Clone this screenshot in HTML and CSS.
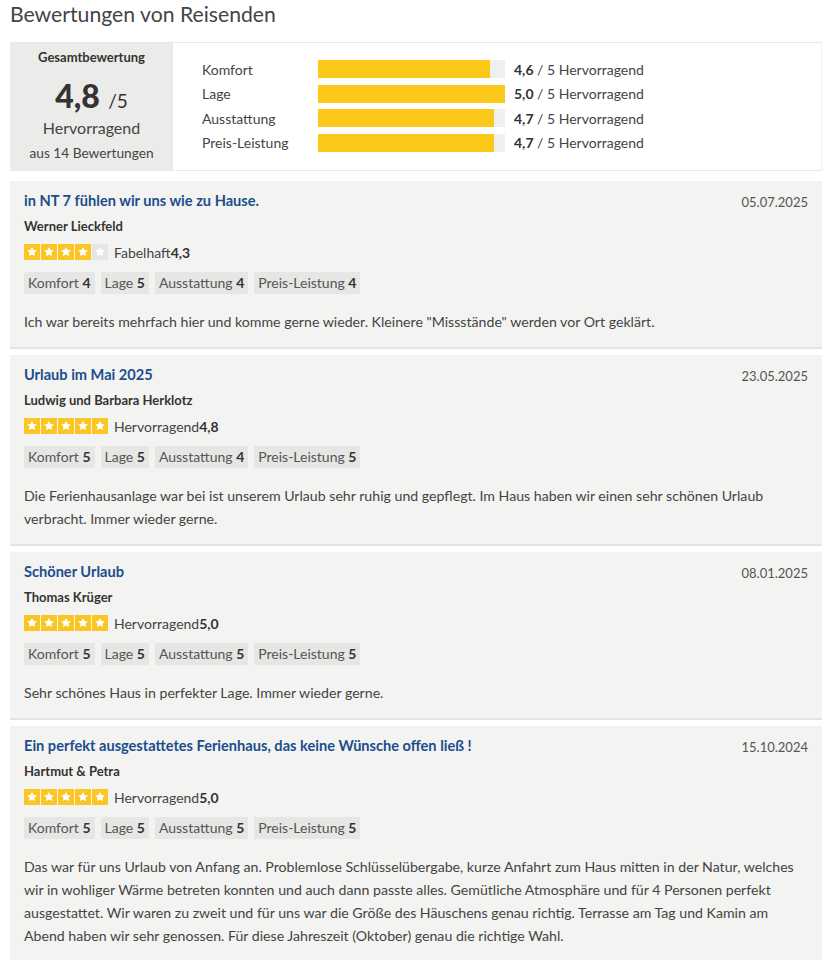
FILE: index.html
```html
<!DOCTYPE html>
<html lang="de">
<head>
<meta charset="utf-8">
<title>Bewertungen von Reisenden</title>
<link rel="stylesheet" href="styles.css">
</head>
<body>
<svg class="defs" width="0" height="0" aria-hidden="true">
  <defs>
    <symbol id="star" viewBox="0 0 16 16">
      <path d="M8 2.9l1.5 3.1 3.4.4-2.5 2.3.7 3.4L8 10.5l-3.1 1.6.7-3.4-2.5-2.3 3.4-.4z" fill="#fff"/>
    </symbol>
  </defs>
</svg>
<main class="page">
  <h1 class="heading">Bewertungen von Reisenden</h1>

  <section class="summary">
    <div class="overall">
      <div class="overall-label">Gesamtbewertung</div>
      <div class="overall-score"><strong>4,8</strong> <span>/5</span></div>
      <div class="overall-word">Hervorragend</div>
      <div class="overall-count">aus 14 Bewertungen</div>
    </div>
    <div class="bars">
      <div class="bar-row">
        <span class="bar-label">Komfort</span>
        <span class="bar-track"><span class="bar-fill" style="width:92%"></span></span>
        <span class="bar-value"><b>4,6</b> / 5 Hervorragend</span>
      </div>
      <div class="bar-row">
        <span class="bar-label">Lage</span>
        <span class="bar-track"><span class="bar-fill" style="width:100%"></span></span>
        <span class="bar-value"><b>5,0</b> / 5 Hervorragend</span>
      </div>
      <div class="bar-row">
        <span class="bar-label">Ausstattung</span>
        <span class="bar-track"><span class="bar-fill" style="width:94%"></span></span>
        <span class="bar-value"><b>4,7</b> / 5 Hervorragend</span>
      </div>
      <div class="bar-row">
        <span class="bar-label">Preis-Leistung</span>
        <span class="bar-track"><span class="bar-fill" style="width:94%"></span></span>
        <span class="bar-value"><b>4,7</b> / 5 Hervorragend</span>
      </div>
    </div>
  </section>

  <article class="review">
    <div class="review-head">
      <h2 class="review-title">in NT 7 fühlen wir uns wie zu Hause.</h2>
      <span class="review-date">05.07.2025</span>
    </div>
    <div class="review-author">Werner Lieckfeld</div>
    <div class="review-rating">
      <span class="stars">
        <svg class="star on"><use href="#star"/></svg><svg class="star on"><use href="#star"/></svg><svg class="star on"><use href="#star"/></svg><svg class="star on"><use href="#star"/></svg><svg class="star off"><use href="#star"/></svg>
      </span>
      <span class="rating-text">Fabelhaft<b>4,3</b></span>
    </div>
    <div class="tags">
      <span class="tag">Komfort <b>4</b></span>
      <span class="tag">Lage <b>5</b></span>
      <span class="tag">Ausstattung <b>4</b></span>
      <span class="tag">Preis-Leistung <b>4</b></span>
    </div>
    <p class="review-text">Ich war bereits mehrfach hier und komme gerne wieder. Kleinere "Missstände" werden vor Ort geklärt.</p>
  </article>

  <article class="review">
    <div class="review-head">
      <h2 class="review-title">Urlaub im Mai 2025</h2>
      <span class="review-date">23.05.2025</span>
    </div>
    <div class="review-author">Ludwig und Barbara Herklotz</div>
    <div class="review-rating">
      <span class="stars">
        <svg class="star on"><use href="#star"/></svg><svg class="star on"><use href="#star"/></svg><svg class="star on"><use href="#star"/></svg><svg class="star on"><use href="#star"/></svg><svg class="star on"><use href="#star"/></svg>
      </span>
      <span class="rating-text">Hervorragend<b>4,8</b></span>
    </div>
    <div class="tags">
      <span class="tag">Komfort <b>5</b></span>
      <span class="tag">Lage <b>5</b></span>
      <span class="tag">Ausstattung <b>4</b></span>
      <span class="tag">Preis-Leistung <b>5</b></span>
    </div>
    <p class="review-text">Die Ferienhausanlage war bei ist unserem Urlaub sehr ruhig und gepflegt. Im Haus haben wir einen sehr schönen Urlaub verbracht. Immer wieder gerne.</p>
  </article>

  <article class="review">
    <div class="review-head">
      <h2 class="review-title">Schöner Urlaub</h2>
      <span class="review-date">08.01.2025</span>
    </div>
    <div class="review-author">Thomas Krüger</div>
    <div class="review-rating">
      <span class="stars">
        <svg class="star on"><use href="#star"/></svg><svg class="star on"><use href="#star"/></svg><svg class="star on"><use href="#star"/></svg><svg class="star on"><use href="#star"/></svg><svg class="star on"><use href="#star"/></svg>
      </span>
      <span class="rating-text">Hervorragend<b>5,0</b></span>
    </div>
    <div class="tags">
      <span class="tag">Komfort <b>5</b></span>
      <span class="tag">Lage <b>5</b></span>
      <span class="tag">Ausstattung <b>5</b></span>
      <span class="tag">Preis-Leistung <b>5</b></span>
    </div>
    <p class="review-text">Sehr schönes Haus in perfekter Lage. Immer wieder gerne.</p>
  </article>

  <article class="review">
    <div class="review-head">
      <h2 class="review-title">Ein perfekt ausgestattetes Ferienhaus, das keine Wünsche offen ließ !</h2>
      <span class="review-date">15.10.2024</span>
    </div>
    <div class="review-author">Hartmut &amp; Petra</div>
    <div class="review-rating">
      <span class="stars">
        <svg class="star on"><use href="#star"/></svg><svg class="star on"><use href="#star"/></svg><svg class="star on"><use href="#star"/></svg><svg class="star on"><use href="#star"/></svg><svg class="star on"><use href="#star"/></svg>
      </span>
      <span class="rating-text">Hervorragend<b>5,0</b></span>
    </div>
    <div class="tags">
      <span class="tag">Komfort <b>5</b></span>
      <span class="tag">Lage <b>5</b></span>
      <span class="tag">Ausstattung <b>5</b></span>
      <span class="tag">Preis-Leistung <b>5</b></span>
    </div>
    <p class="review-text">Das war für uns Urlaub von Anfang an. Problemlose Schlüsselübergabe, kurze Anfahrt zum Haus mitten in der Natur, welches wir in wohliger Wärme betreten konnten und auch dann passte alles. Gemütliche Atmosphäre und für 4 Personen perfekt ausgestattet. Wir waren zu zweit und für uns war die Größe des Häuschens genau richtig. Terrasse am Tag und Kamin am Abend haben wir sehr genossen. Für diese Jahreszeit (Oktober) genau die richtige Wahl.</p>
  </article>
</main>
</body>
</html>
```

FILE: styles.css
```css
* { box-sizing: border-box; }

html, body {
  margin: 0;
  padding: 0;
  background: #fff;
}

body {
  font-family: Lato, "Liberation Sans", sans-serif;
  font-size: 14px;
  color: #444;
}

.defs { position: absolute; width: 0; height: 0; }

.page {
  padding: 0 7px 0 10px;
}

.heading {
  margin: 0;
  font-size: 21.2px;
  line-height: 28px;
  font-weight: 400;
  color: #444;
}

/* Summary */
.summary {
  margin-top: 14px;
  display: flex;
  border-top: 1px solid #e8e8e8;
  border-bottom: 1px solid #e8e8e8;
  border-right: 1px solid #efefef;
}

.overall {
  width: 163px;
  flex: none;
  background: #ebebea;
  text-align: center;
  padding: 5px 0 6px;
  color: #444;
}

.overall-label {
  font-size: 13px;
  font-weight: 700;
  line-height: 18px;
  color: #333;
}

.overall-score {
  margin-top: 11px;
  font-size: 32px;
  line-height: 38px;
  height: 38px;
  color: #333;
}
.overall-score strong {
  font-weight: 900;
}
.overall-score span {
  font-size: 19px;
  line-height: 1;
}

.overall-word {
  font-size: 16px;
  line-height: 24px;
  margin-top: 1px;
}

.overall-count {
  font-size: 13.7px;
  line-height: 22px;
  margin-top: 2px;
}

.bars {
  padding: 14px 0 15px 29px;
  display: flex;
  flex-direction: column;
}

.bar-row {
  display: flex;
  align-items: center;
  height: 24.5px;
}

.bar-label {
  width: 116px;
  flex: none;
  color: #444;
}

.bar-track {
  width: 187px;
  height: 18px;
  background: #efefef;
  display: flex;
}

.bar-fill {
  height: 100%;
  background: #fcc81a;
}

.bar-value {
  margin-left: 9px;
  color: #444;
}
.bar-value b { color: #333; }

/* Reviews */
.review {
  margin-top: 10px;
  background: #f3f3f1;
  border-bottom: 2px solid #e3e3e1;
  padding: 10px 14px 14px;
}
.review + .review { margin-top: 6px; }

.review-head {
  display: flex;
  justify-content: space-between;
  align-items: flex-start;
}

.review-title {
  margin: 0;
  font-size: 14.6px;
  line-height: 20px;
  font-weight: 700;
  color: #1c4d8d;
}

.review-date {
  font-size: 13px;
  line-height: 20px;
  color: #555;
  margin-top: 1px;
}

.review-author {
  margin-top: 4px;
  font-size: 13px;
  line-height: 20px;
  font-weight: 700;
  color: #333;
}

.review-rating {
  margin-top: 7px;
  display: flex;
  align-items: center;
  height: 18px;
}

.stars {
  display: flex;
  gap: 1px;
}

.star {
  width: 16px;
  height: 16px;
  display: block;
}
.star.on { background: #f9c624; }
.star.off { background: #e6e6e4; }

.rating-text {
  margin-left: 6px;
  color: #444;
}
.rating-text b { color: #333; }

.tags {
  margin-top: 11px;
  display: flex;
  gap: 6px;
}

.tag {
  background: #e6e6e4;
  height: 22px;
  line-height: 22px;
  padding: 0 4px;
  color: #555;
}
.tag b { color: #333; }

.review-text {
  margin: 16px 0 0;
  font-size: 14.15px;
  line-height: 23px;
  color: #444;
}
```
